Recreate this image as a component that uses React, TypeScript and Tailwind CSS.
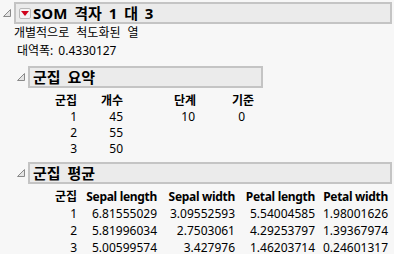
import React from 'react';

const FONT = '"Noto Sans", "Noto Sans CJK KR", sans-serif';

function Disclosure() {
  return (
    <svg width="8" height="8" viewBox="0 0 8 8" className="shrink-0">
      <polygon points="7.5,0.5 7.5,7.5 0.5,7.5" fill="#e4e4e4" stroke="#8a8a8a" strokeWidth="1" />
    </svg>
  );
}

function RedMenu() {
  return (
    <div className="w-[12px] h-[11px] border border-[#b9b9b9] rounded-[2px] bg-[#f4f4f4] flex items-center justify-center shrink-0">
      <svg width="8" height="5" viewBox="0 0 8 5">
        <polygon points="0,0 8,0 4,5" fill="#d0021b" />
      </svg>
    </div>
  );
}

function Header({ title, red }: { title: string; red?: boolean }) {
  return (
    <div className="flex items-center">
      <div className="w-[14px] flex items-center justify-start pl-[3px]">
        <Disclosure />
      </div>
      <div className="flex-1 h-[22px] border-2 border-[#c4c4c4] bg-[#ebebeb] flex items-center gap-[2px] pl-[3px]">
        {red && <RedMenu />}
        <span className="text-[15px] font-bold text-black leading-none [word-spacing:3px]">{title}</span>
      </div>
    </div>
  );
}

const summaryRows = [
  ['1', '45', '10', '0'],
  ['2', '55', '', ''],
  ['3', '50', '', ''],
];

const meanRows = [
  ['1', '6.81555029', '3.09552593', '5.54004585', '1.98001626'],
  ['2', '5.81996034', '2.7503061', '4.29253797', '1.39367974'],
  ['3', '5.00599574', '3.427976', '1.46203714', '0.24601317'],
];

export default function App() {
  return (
    <div
      className="w-[394px] h-[254px] bg-[#f7f7f7] overflow-hidden text-[12px] text-black"
      style={{ fontFamily: FONT }}
    >
      <div className="pt-[2px] pr-[2px]">
        <Header title="SOM 격자 1 대 3" red />
      </div>

      <div className="pl-[14px] h-[18px] flex items-center [word-spacing:4px]">개별적으로 척도화된 열</div>
      <div className="pl-[17px] h-[18px] flex items-center">
        <span>대역폭:</span>
        <span className="ml-[5px]">0.4330127</span>
      </div>

      <div className="pl-[14px] mt-[6px] w-[263px]">
        <Header title="군집 요약" />
      </div>

      <div className="mt-[5px]">
        <div className="flex h-[16px] items-center font-bold">
          <div className="w-[77px] text-right">군집</div>
          <div className="w-[46px] text-right">개수</div>
          <div className="w-[73px] text-right">단계</div>
          <div className="w-[58px] text-right">기준</div>
        </div>
        {summaryRows.map((r, i) => (
          <div key={i} className="flex h-[16px] items-center">
            <div className="w-[77px] text-right">{r[0]}</div>
            <div className="w-[46px] text-right">{r[1]}</div>
            <div className="w-[72px] text-right">{r[2]}</div>
            <div className="w-[50px] text-right">{r[3]}</div>
          </div>
        ))}
      </div>

      <div className="pl-[14px] pr-[2px] mt-[5px]">
        <Header title="군집 평균" />
      </div>

      <div className="mt-[4px]">
        <div className="flex h-[17px] items-center font-bold">
          <div className="w-[77px] text-right">군집</div>
          <div className="w-[80px] text-right tracking-[-0.3px]">Sepal length</div>
          <div className="w-[78px] text-right tracking-[-0.3px]">Sepal width</div>
          <div className="w-[80px] text-right tracking-[-0.3px]">Petal length</div>
          <div className="w-[73px] text-right tracking-[-0.3px]">Petal width</div>
        </div>
        {meanRows.map((r, i) => (
          <div key={i} className="flex h-[17px] items-center">
            <div className="w-[77px] text-right">{r[0]}</div>
            <div className="w-[80px] text-right">{r[1]}</div>
            <div className="w-[78px] text-right">{r[2]}</div>
            <div className="w-[80px] text-right">{r[3]}</div>
            <div className="w-[73px] text-right">{r[4]}</div>
          </div>
        ))}
      </div>
    </div>
  );
}
